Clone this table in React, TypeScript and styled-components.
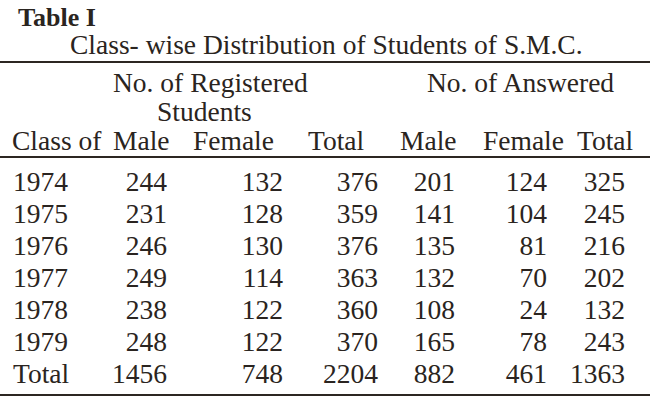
import styled, { createGlobalStyle } from 'styled-components';

const GlobalStyle = createGlobalStyle`
  html, body {
    margin: 0;
    padding: 0;
    background: #ffffff;
  }
`;

// Styling/CSS
const PAGE = styled.div`
  width: 650px;
  height: 404px;
  overflow: hidden;
  font-family: 'Liberation Serif', 'Times New Roman', serif;
  color: #2a2420;
  background: #ffffff;
`;

const CAPTION = styled.div`
  margin-top: 5px;
  padding-left: 18px;
  font-size: 26px;
  line-height: 26px;
  font-weight: bold;
`;

const TITLE = styled.div`
  padding-left: 70px;
  font-size: 27.5px;
  line-height: 27px;
`;

const RULE = styled.div<{ $gap: number }>`
  margin-top: ${(p) => p.$gap}px;
  height: 2px;
  background: #2c2622;
`;

const GROUP_ROW = styled.div`
  display: grid;
  grid-template-columns: 113px 314px 1fr;
  margin-top: 5px;
  font-size: 27.5px;
  line-height: 29px;
`;

const GROUP = styled.div`
  grid-column: ${(p: { $col: number }) => p.$col};
`;

const INDENT = styled.div`
  padding-left: 44px;
`;

const HEAD_ROW = styled.div`
  display: grid;
  grid-template-columns: 113px 80px 115px 92px 83px 94px 1fr;
  font-size: 27.5px;
  line-height: 29px;
  white-space: nowrap;

  & > span:first-child {
    padding-left: 12px;
  }
`;

const BODY = styled.div`
  margin-top: 8px;
`;

const DATA_ROW = styled.div`
  display: grid;
  grid-template-columns: 100px 67px 116px 95px 77px 92px 78px;
  font-size: 27.5px;
  line-height: 32px;
  white-space: nowrap;
`;

const CELL = styled.span<{ $first?: boolean }>`
  text-align: ${(p) => (p.$first ? 'left' : 'right')};
  padding-left: ${(p) => (p.$first ? '13px' : '0')};
`;
// End of Styling/CSS

const rows = [
  ['1974', '244', '132', '376', '201', '124', '325'],
  ['1975', '231', '128', '359', '141', '104', '245'],
  ['1976', '246', '130', '376', '135', '81', '216'],
  ['1977', '249', '114', '363', '132', '70', '202'],
  ['1978', '238', '122', '360', '108', '24', '132'],
  ['1979', '248', '122', '370', '165', '78', '243'],
  ['Total', '1456', '748', '2204', '882', '461', '1363'],
];

const headers = ['Class of', 'Male', 'Female', 'Total', 'Male', 'Female', 'Total'];

function App() {
  return (
    <>
      <GlobalStyle />
      <PAGE>
        <CAPTION>Table I</CAPTION>
        <TITLE>Class- wise Distribution of Students of S.M.C.</TITLE>
        <RULE $gap={3} />

        <GROUP_ROW>
          <GROUP $col={2}>
            No. of Registered
            <INDENT>Students</INDENT>
          </GROUP>
          <GROUP $col={3}>No. of Answered</GROUP>
        </GROUP_ROW>

        <HEAD_ROW>
          {headers.map((h, i) => (
            <span key={i}>{h}</span>
          ))}
        </HEAD_ROW>
        <RULE $gap={1} />

        <BODY>
          {rows.map((row) => (
            <DATA_ROW key={row[0]}>
              {row.map((value, i) => (
                <CELL key={i} $first={i === 0}>
                  {value}
                </CELL>
              ))}
            </DATA_ROW>
          ))}
        </BODY>
        <RULE $gap={4} />
      </PAGE>
    </>
  );
}

export default App;
